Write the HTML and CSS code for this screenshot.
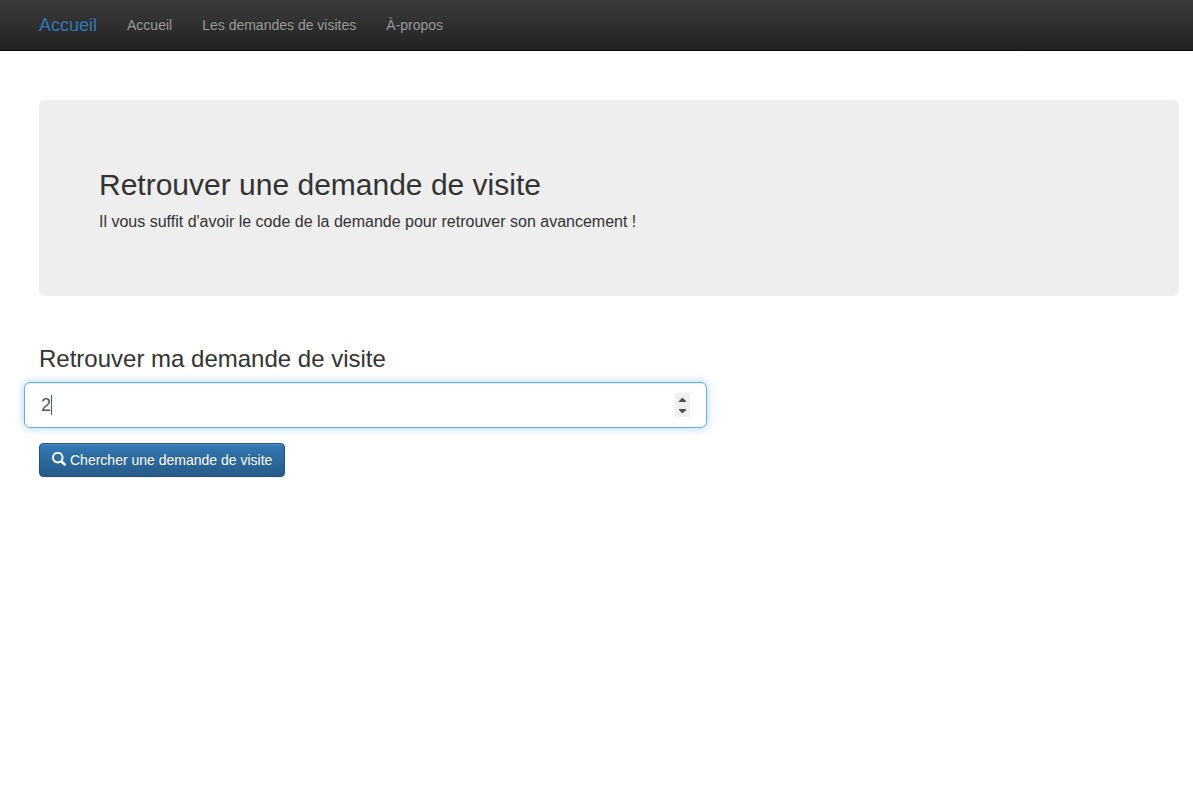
FILE: index.html
```html
<!DOCTYPE html>
<html lang="fr">
<head>
<meta charset="utf-8">
<meta name="viewport" content="width=device-width, initial-scale=1">
<title>Retrouver une demande de visite</title>
<link rel="stylesheet" href="styles.css">
</head>
<body>
<nav class="navbar">
  <a class="brand" href="#">Accueil</a>
  <ul class="nav">
    <li><a href="#">Accueil</a></li>
    <li><a href="#">Les demandes de visites</a></li>
    <li><a href="#">À-propos</a></li>
  </ul>
</nav>
<main class="container">
  <header class="jumbotron">
    <h1>Retrouver une demande de visite</h1>
    <p>Il vous suffit d'avoir le code de la demande pour retrouver son avancement !</p>
  </header>
  <form class="search">
    <h2><label for="code">Retrouver ma demande de visite</label></h2>
    <div class="field">
      <input class="control" id="code" type="number" value="2">
    </div>
    <button class="btn" type="button">
      <svg class="icon" viewBox="0 0 14 14" aria-hidden="true"><circle cx="5.8" cy="5.6" r="4.8" fill="none" stroke="currentColor" stroke-width="2"/><path d="M9 9l4.5 4.2" fill="none" stroke="currentColor" stroke-width="2.6"/></svg>
      <span>Chercher une demande de visite</span>
    </button>
  </form>
</main>
</body>
</html>
```
FILE: styles.css
```css
* {
  box-sizing: border-box;
}

body {
  margin: 0;
  background: #fff;
  color: #333;
  font: 14px/20px "Liberation Sans", Arial, sans-serif;
}

.navbar {
  display: flex;
  padding-left: 24px;
  border-bottom: 1px solid #080808;
  background: linear-gradient(#3c3c3c, #222);
}

.nav {
  display: flex;
  margin: 0;
  padding: 0;
  list-style: none;
}

.brand,
.nav a {
  display: block;
  padding: 15px;
  text-decoration: none;
  text-shadow: 0 -1px 0 rgba(0, 0, 0, .25);
}

.brand {
  color: #337ab7;
  font-size: 18px;
}

.nav a {
  color: #9d9d9d;
}

.container {
  padding: 49px 14px 30px 39px;
}

.jumbotron {
  margin-bottom: 50px;
  padding: 68px 60px 63px;
  border-radius: 6px;
  background: #eee;
}

h1,
h2,
p {
  margin: 0;
  font-weight: 400;
}

h1 {
  margin-bottom: 9px;
  font-size: 30px;
  line-height: 33px;
}

p {
  font-size: 16px;
  line-height: 23px;
}

h2 {
  margin-bottom: 10px;
  font-size: 24px;
  line-height: 26px;
}

.field {
  position: relative;
  width: calc(60% - 1px);
  margin: 0 0 15px -15px;
}

/* Text caret of the focused field */
.field::after {
  content: "";
  position: absolute;
  top: 13px;
  left: 27px;
  width: 1px;
  height: 20px;
  background: #555;
}

.control {
  display: block;
  width: 100%;
  height: 46px;
  padding: 10px 16px;
  border: 1px solid #66afe9;
  border-radius: 6px;
  outline: 0;
  background: #fff;
  box-shadow: inset 0 1px 1px rgba(0, 0, 0, .075), 0 0 8px rgba(102, 175, 233, .6);
  color: #555;
  font: 18px/24px "Liberation Sans", Arial, sans-serif;
}

.control::-webkit-inner-spin-button {
  -webkit-appearance: none;
  width: 15px;
  height: 24px;
  background: #f0f0f0 url("data:image/svg+xml,%3Csvg xmlns='http://www.w3.org/2000/svg' width='15' height='24'%3E%3Cpath fill='%23505050' d='M4 9v-1l3-3h1l3 3v1zM4 16v1l3 3h1l3-3v-1z'/%3E%3C/svg%3E") no-repeat;
  opacity: 1;
}

.btn {
  display: inline-flex;
  align-items: center;
  gap: 4px;
  padding: 6px 12px;
  border: 1px solid #245580;
  border-radius: 4px;
  background: linear-gradient(#337ab7, #265a88);
  box-shadow: inset 0 1px 0 rgba(255, 255, 255, .15), 0 1px 1px rgba(0, 0, 0, .075);
  color: #fff;
  font: 14px/20px "Liberation Sans", Arial, sans-serif;
  text-shadow: 0 -1px 0 rgba(0, 0, 0, .2);
  cursor: pointer;
}

.icon {
  width: 14px;
  height: 14px;
  margin-bottom: 2px;
}
```
